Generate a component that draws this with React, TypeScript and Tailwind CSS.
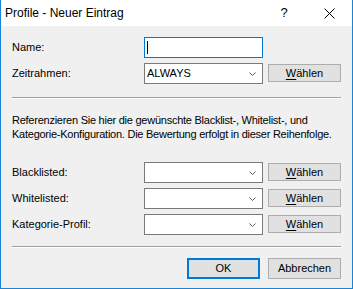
import React from 'react';

const font = { fontFamily: '"Liberation Sans", Arial, sans-serif' };

function Chevron() {
    return (
        <svg width="7" height="4" viewBox="0 0 7 4" className="shrink-0">
            <polyline points="0.5,0.5 3.5,3.5 6.5,0.5" fill="none" stroke="#5a5a5a" strokeWidth="1" />
        </svg>
    );
}

function WinButton({ children, primary }: { children: React.ReactNode; primary?: boolean }) {
    return (
        <div
            className={`w-[73px] flex items-center justify-center bg-[#e1e1e1] text-[11px] text-black ${primary ? 'h-[21px] border-2 border-[#0078d7]' : 'h-[21px] border border-[#adadad]'}`}
        >
            {children}
        </div>
    );
}

function Waehlen() {
    return (
        <div className="w-[73px] h-[18px] mt-[1px] flex items-center justify-center bg-[#e1e1e1] border border-[#adadad] text-[11px] text-black">
            <span>
                <span className="underline underline-offset-2">W</span>ählen
            </span>
        </div>
    );
}

function ComboRow({ label, value }: { label: string; value?: string }) {
    return (
        <div className="flex items-start h-[21px]">
            <div className="w-[132px] h-[21px] flex items-center text-[11px] text-black">{label}</div>
            <div className="w-[119px] h-[21px] border border-[#7a7a7a] bg-white flex items-center justify-between pl-[2px] pr-[6px] text-[11px] text-black">
                <span>{value}</span>
                <Chevron />
            </div>
            <div className="ml-[5px]">
                <Waehlen />
            </div>
        </div>
    );
}

export default function App() {
    return (
        <div style={font} className="w-[353px] h-[289px] flex flex-col border-l border-r border-b border-[#1883d7] bg-[#f0f0f0] overflow-hidden">
            {/* title bar */}
            <div className="h-[26px] bg-white flex items-center shrink-0">
                <span className="pl-[4px] text-[12px] text-black flex-1">Profile - Neuer Eintrag</span>
                <span className="w-[20px] text-center text-[13px] text-black mr-[30px]">?</span>
                <svg width="11" height="11" viewBox="0 0 11 11" className="mr-[17px]">
                    <line x1="0.5" y1="0.5" x2="10.5" y2="10.5" stroke="#000" strokeWidth="1" />
                    <line x1="10.5" y1="0.5" x2="0.5" y2="10.5" stroke="#000" strokeWidth="1" />
                </svg>
            </div>

            <div className="flex flex-col pl-[11px] pr-[11px]">
                {/* name */}
                <div className="flex items-center h-[21px] mt-[11px]">
                    <div className="w-[132px] text-[11px] text-black">Name:</div>
                    <div className="w-[119px] h-[21px] border border-[#0078d7] bg-white flex items-center pl-[2px]">
                        <div className="w-[1px] h-[13px] bg-black" />
                    </div>
                </div>
                <div className="mt-[5px]">
                    <ComboRow label="Zeitrahmen:" value="ALWAYS" />
                </div>

                <div className="mt-[13px] h-[1px] bg-[#a0a0a0]" />
                <div className="h-[1px] bg-white" />

                <p className="mt-[14px] text-[11px] leading-[14px] tracking-[-0.25px] whitespace-nowrap text-black">
                    Referenzieren Sie hier die gewünschte Blacklist-, Whitelist-, und
                    <br />
                    Kategorie-Konfiguration. Die Bewertung erfolgt in dieser Reihenfolge.
                </p>

                <div className="mt-[21px] flex flex-col gap-[5px]">
                    <ComboRow label="Blacklisted:" />
                    <ComboRow label="Whitelisted:" />
                    <ComboRow label="Kategorie-Profil:" />
                </div>

                <div className="mt-[11px] h-[1px] bg-[#a0a0a0]" />
                <div className="h-[1px] bg-white" />

                <div className="mt-[10px] flex justify-end gap-[8px]">
                    <WinButton primary>OK</WinButton>
                    <WinButton>Abbrechen</WinButton>
                </div>
            </div>
        </div>
    );
}
